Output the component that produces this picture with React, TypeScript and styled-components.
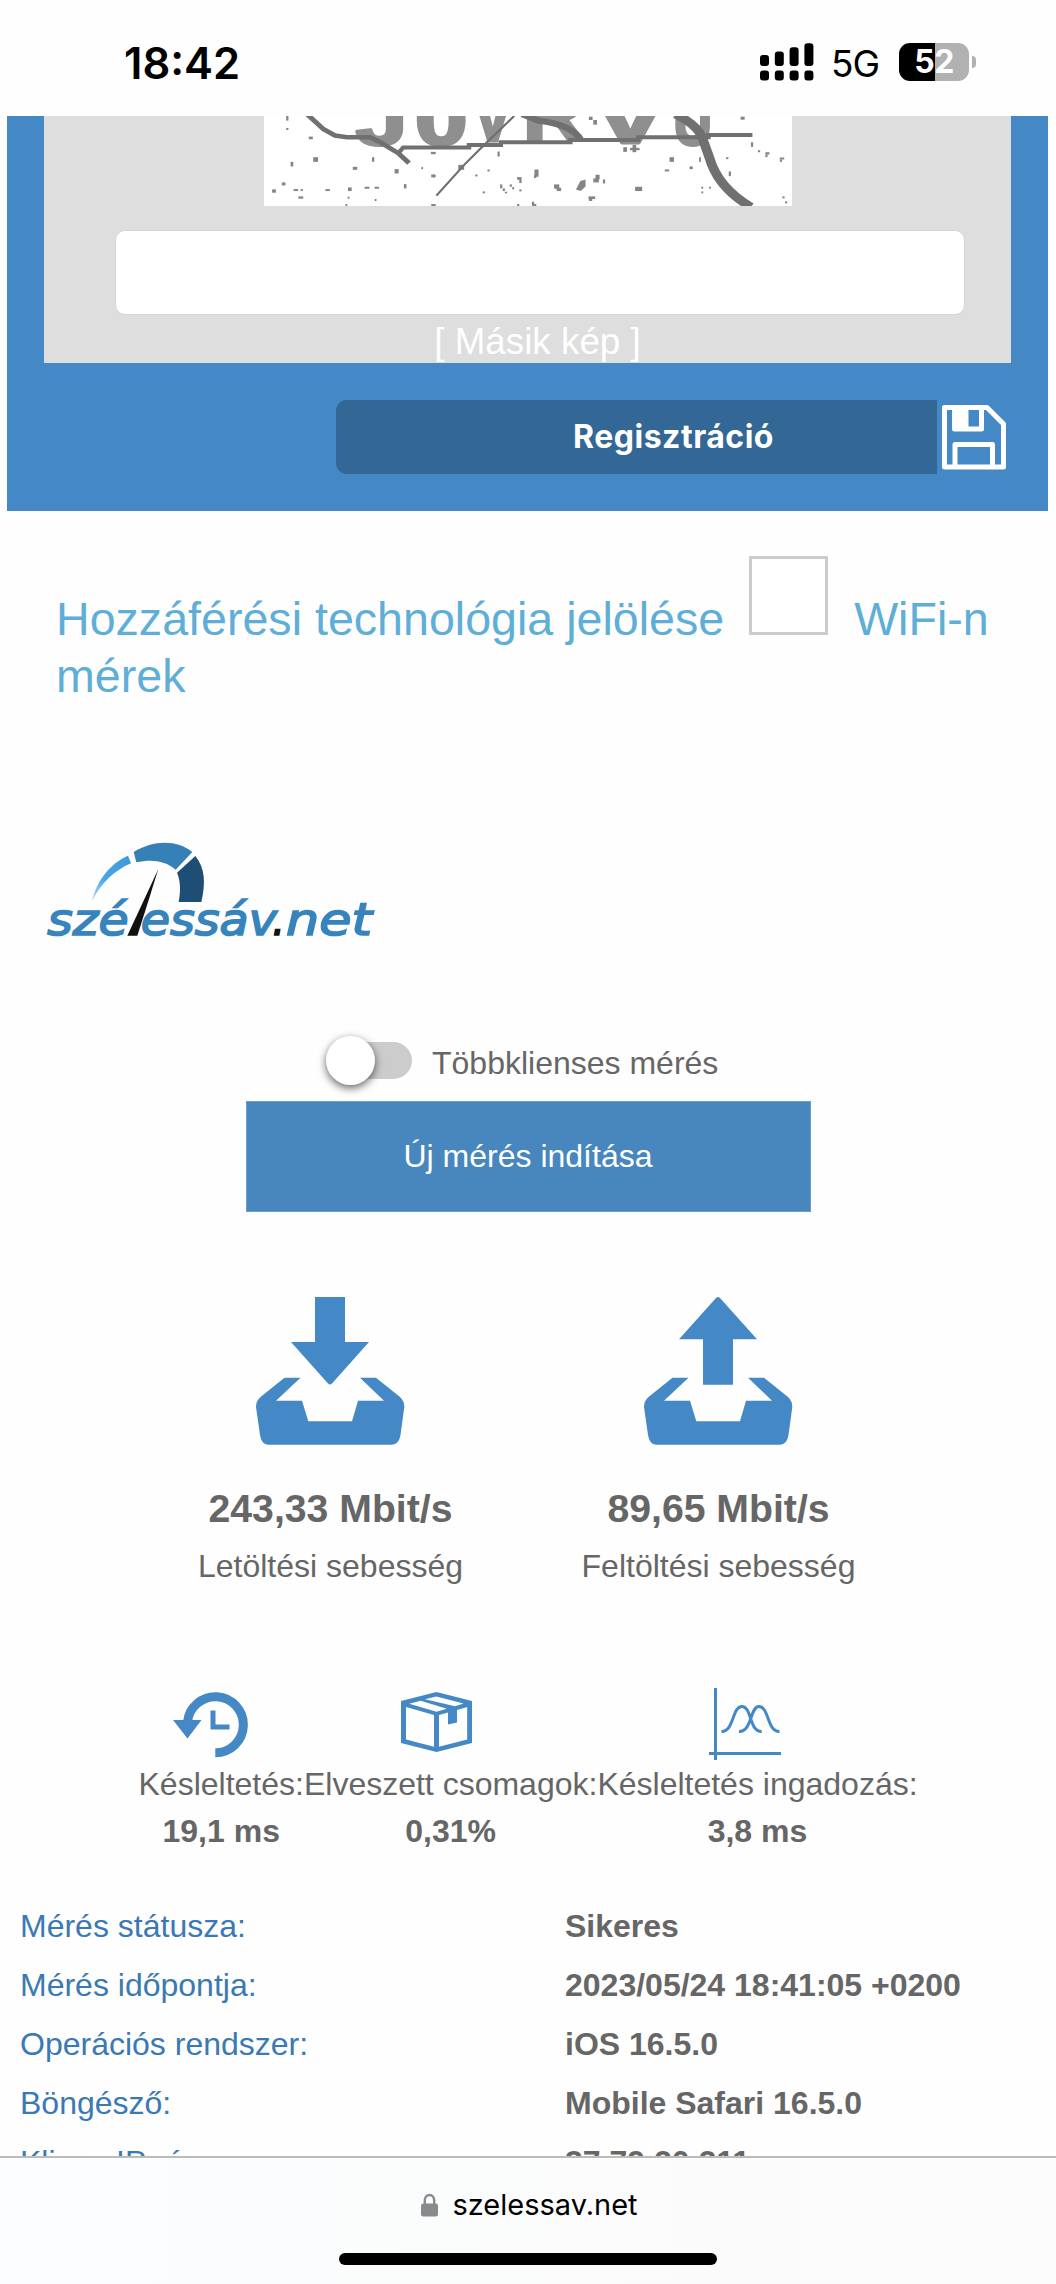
import React from "react";
import styled, { createGlobalStyle } from "styled-components";

const blue = "#4488c5";
const sans = '"Liberation Sans", Arial, sans-serif';
const system = 'Inter, "Liberation Sans", sans-serif';

const Global = createGlobalStyle`
  *, *::before, *::after { box-sizing: border-box; }
  html, body { margin: 0; padding: 0; background: #fefefe; }
  svg { display: block; flex: none; }
`;

const Screen = styled.div`
  width: 1056px;
  height: 2284px;
  display: flex;
  flex-direction: column;
  overflow: hidden;
  background: #fefefe;
  color: #666;
  font-family: ${sans};
  font-size: 32px;
`;

const StatusBar = styled.header`
  height: 116px;
  flex: none;
  display: flex;
  justify-content: space-between;
  padding: 36px 80px 0 124px;
  font-family: ${system};
  color: #000;
`;

const Clock = styled.time`
  font-size: 43.5px;
  font-weight: 600;
  line-height: 55px;
`;

const Indicators = styled.div`
  display: flex;
  height: 52px;
`;

const Network = styled.span`
  width: 67px;
  padding-left: 17px;
  font-size: 37px;
  line-height: 56px;
  letter-spacing: -1px;
  white-space: nowrap;
`;

const Signal = styled.svg`
  margin-top: 7px;
`;

const Battery = styled.div`
  width: 70px;
  height: 38px;
  margin: 7px 0 0 18px;
  border-radius: 11px;
  background: linear-gradient(90deg, #000 36px, #b1b1b1 36px);
  color: #fff;
  font-size: 32px;
  font-weight: 700;
  line-height: 38px;
  letter-spacing: -0.5px;
  text-align: center;
`;

const BatteryTip = styled.span`
  width: 4px;
  height: 12px;
  margin: 20px 0 0 3px;
  border-radius: 0 6px 6px 0;
  background: #b1b1b1;
`;

const FormBand = styled.section`
  flex: none;
  height: 395px;
  margin: 0 8px 0 7px;
  background: ${blue};
`;

const CaptchaPanel = styled.div`
  width: 967px;
  height: 247px;
  margin-left: 37px;
  padding-left: 71px;
  background: #dedede;
`;

const CaptchaImage = styled.svg`
  margin-left: 149px;
  background: #fff;
`;

const CaptchaInput = styled.input`
  display: block;
  width: 850px;
  height: 85px;
  margin-top: 24px;
  border: 1px solid #d6d6d6;
  border-radius: 10px;
  background: #fff;
`;

const OtherImage = styled.a`
  display: block;
  width: 850px;
  padding-right: 5px;
  text-align: center;
  color: #fff;
  font-size: 36.8px;
  line-height: 54px;
`;

const SubmitRow = styled.div`
  display: flex;
  height: 74px;
  margin: 37px 37px 0 329px;
`;

const SubmitButton = styled.button`
  width: 601px;
  padding: 0 0 0 74px;
  border: 0;
  border-radius: 11px 0 0 11px;
  background: #336795;
  color: #fff;
  font-family: ${system};
  font-size: 32px;
  font-weight: 700;
  line-height: 74px;
  letter-spacing: 0.5px;
`;

const Floppy = styled.svg`
  margin: 5px 0 0 5px;
`;

const TechHeading = styled.h2`
  flex: none;
  width: 960px;
  height: 264px;
  margin: 45px 0 0 56px;
  color: #5eaed8;
  font-size: 46.600px;
  font-weight: 400;
  line-height: 56.7px;
`;

const WifiBox = styled.span`
  display: inline-block;
  width: 79px;
  height: 79px;
  margin: 0 13px 0 12px;
  border: 3px solid #ccc;
  background: #fff;
  vertical-align: baseline;
`;

const Logo = styled.svg`
  margin-left: 20px;
`;

const ToggleRow = styled.label`
  flex: none;
  display: flex;
  height: 49px;
  margin: 76px 0 0 326px;
  line-height: 54px;
`;

const Track = styled.span`
  width: 81px;
  height: 37px;
  margin: 6px 20px 0 5px;
  border-radius: 19px;
  background: #ccc;
`;

const Knob = styled.span`
  display: block;
  width: 49px;
  height: 49px;
  margin: -6px 0 0 -5px;
  border-radius: 50%;
  background: #fff;
  box-shadow: 0 3px 8px rgba(0, 0, 0, 0.6);
`;

const StartButton = styled.button`
  flex: none;
  width: 565px;
  height: 111px;
  margin: 16px 0 0 245.5px;
  padding: 0;
  border: 1px solid #6a9fce;
  background: #4787be;
  color: #fff;
  font-family: ${sans};
  font-size: 32px;
  line-height: 109px;
`;

const Speeds = styled.section`
  flex: none;
  display: flex;
  width: 776px;
  margin: 85px 0 0 136.5px;
`;

const Speed = styled.div`
  flex: 1;
  display: flex;
  flex-direction: column;
  align-items: center;
  line-height: 56px;
`;

const SpeedValue = styled.strong`
  margin: 36px 0 1px;
  font-size: 39.2px;
`;

const Stats = styled.section`
  flex: none;
  display: flex;
  width: 779px;
  height: 182px;
  margin: 94px 0 0 138.5px;
`;

const Stat = styled.div`
  display: flex;
  flex-direction: column;
  align-items: center;
  line-height: 47px;
  white-space: nowrap;
`;

const StatIcon = styled.div<{ $gap: number }>`
  height: 73px;
  display: flex;
  align-items: flex-start;
  padding-right: ${(p) => p.$gap}px;
`;

const StatSvg = styled.svg<{ $drop?: number }>`
  margin-top: ${(p) => p.$drop ?? 0}px;
`;

const Details = styled.dl`
  flex: none;
  display: grid;
  grid-template-columns: 545px 1fr;
  grid-auto-rows: 59px;
  height: 259px;
  margin: 27px 0 0;
  padding-left: 20px;
  overflow: hidden;
  line-height: 59px;
`;

const Term = styled.dt`
  color: #3a79b3;
`;

const Value = styled.dd`
  margin: 0;
  font-weight: 700;
`;

const BrowserBar = styled.footer`
  flex: none;
  display: flex;
  flex-direction: column;
  align-items: center;
  height: 129px;
  border-top: 2px solid #bcbcbd;
  background: linear-gradient(90deg, #fbfdfe, #fbfbfb 70%, #fcfcfc);
  color: #000;
  font-family: ${system};
`;

const Address = styled.div`
  display: flex;
  align-items: flex-start;
  gap: 14px;
  margin-top: 29px;
  padding-left: 3px;
  font-size: 29px;
  line-height: 36px;
`;

const Lock = styled.svg`
  margin-top: 6px;
`;

const HomeIndicator = styled.div`
  width: 378px;
  height: 12px;
  margin-top: 30px;
  border-radius: 6px;
  background: #000;
`;

const captchaLetters = [
  { ch: "J", x: 312, y: 134, w: 140 },
  { ch: "0", x: 472, y: 134, w: 142 },
  { ch: "V", x: 628, y: 122, w: 108 },
  { ch: "R", x: 764, y: 120, w: 165 },
  { ch: "V", x: 956, y: 130, w: 196 },
  { ch: "U", x: 1170, y: 134, w: 105 },
];

const specks: number[][] = [
  [124, 48, 6, 14], [124, 84, 6, 6], [185, 110, 11, 8], [136, 186, 7, 14], [197, 172, 13, 14],
  [356, 172, 6, 14], [304, 201, 12, 9], [417, 208, 11, 13], [489, 202, 5, 6], [515, 156, 13, 7],
  [516, 224, 12, 9], [442, 253, 7, 13], [112, 248, 10, 9], [86, 269, 10, 10], [144, 268, 12, 6],
  [163, 268, 6, 6], [157, 290, 13, 7], [230, 268, 12, 6], [291, 263, 10, 11], [336, 261, 13, 6],
  [363, 261, 12, 6], [290, 291, 5, 6], [363, 298, 5, 6], [284, 313, 5, 6], [516, 313, 12, 6],
  [589, 195, 16, 15], [635, 224, 6, 6], [668, 209, 6, 6], [655, 275, 6, 6], [695, 155, 6, 15],
  [748, 232, 12, 8], [754, 238, 6, 12], [728, 254, 6, 7], [735, 262, 5, 7], [702, 254, 6, 12],
  [709, 266, 6, 8], [715, 276, 6, 5], [754, 269, 6, 6], [795, 209, 11, 22], [794, 225, 6, 10],
  [848, 254, 14, 13], [855, 264, 12, 10], [960, 225, 11, 14], [954, 236, 15, 12], [980, 239, 6, 12],
  [1067, 261, 19, 13], [941, 290, 18, 8], [942, 297, 9, 7], [788, 306, 6, 13], [794, 313, 6, 6],
  [748, 313, 6, 6], [1060, 135, 10, 22], [1053, 144, 26, 7], [1035, 142, 10, 14], [1160, 172, 12, 14],
  [1147, 209, 12, 6], [1214, 200, 9, 8], [1240, 172, 5, 14], [1320, 215, 6, 14], [1313, 172, 6, 6],
  [1380, 127, 6, 14], [1399, 151, 6, 6], [1419, 157, 11, 7], [1419, 164, 6, 8], [1458, 173, 12, 6],
  [1458, 179, 6, 7], [1352, 50, 11, 9], [1246, 261, 5, 6], [1246, 275, 5, 6], [1267, 261, 5, 6],
  [1465, 290, 6, 6], [1472, 305, 6, 6], [942, 50, 10, 10], [954, 60, 10, 14],
];

function Captcha() {
  return (
    <CaptchaImage width="528" height="90" viewBox="64 48 1427 271" preserveAspectRatio="none">
      <g
        fill="#8f8f8f"
        stroke="#8f8f8f"
        strokeWidth="9"
        strokeLinejoin="round"
        fontFamily="Liberation Sans, sans-serif"
        fontWeight="700"
        fontSize="215"
      >
        {captchaLetters.map((l) => (
          <text key={l.x} x={l.x} y={l.y} textLength={l.w} lengthAdjust="spacingAndGlyphs">{l.ch}</text>
        ))}
      </g>
      <g fill="#858585">
        {specks.map(([x, y, w, h]) => <rect key={`${x}-${y}`} x={x} y={y} width={w} height={h} />)}
        <path d="M907 269L919 244L933 239V260L920 274Z" />
      </g>
      <g fill="none" stroke="#707070">
        <path d="M180 42L225 88L256 107L288 112H350L375 125L427 160L456 190" strokeWidth="14" />
        <path d="M427 160L440 143H618V135H704V127H892V120H1075V112H1265V105H1384" strokeWidth="12" />
        <path d="M740 48L650 145L605 195L530 288" strokeWidth="6" />
        <path d="M762 42L806 62C865 70 905 90 920 120" strokeWidth="19" />
        <path d="M1176 42C1212 62 1239 85 1249 115L1268 174C1285 240 1325 286 1380 322" strokeWidth="26" />
      </g>
    </CaptchaImage>
  );
}

function FloppyIcon() {
  return (
    <Floppy width="64" height="65" viewBox="0 0 64 65" fill="none" stroke="#fff" strokeWidth="5" strokeLinejoin="round">
      <path d="M2.500 2.500H45L61.500 19V62H2.500Z" />
      <path d="M12.500 3V24H39.500V3" strokeWidth="5" />
      <path d="M11 3H26.500V25H11Z" fill="#fff" stroke="none" />
      <path d="M13 61V39.500H50.500V61" strokeWidth="5" />
    </Floppy>
  );
}

function BrandLogo() {
  const text = {
    fontFamily: "DejaVu Sans, sans-serif",
    fontStyle: "oblique",
    fontSize: 133,
    fill: "#3784bd",
    stroke: "#3784bd",
    strokeWidth: 5,
    lengthAdjust: "spacingAndGlyphs" as const,
    y: 345,
  };
  return (
    <Logo width="380" height="140" viewBox="0 0 1140 420">
      <defs>
        <linearGradient id="sweep" x1="1" y1="0" x2="0" y2="1">
          <stop offset="0" stopColor="#3d98da" />
          <stop offset="0.6" stopColor="#4ba5e3" />
          <stop offset="1" stopColor="#b5dcf6" />
        </linearGradient>
      </defs>
      <path d="M216 244C230 180 272 130 324 107L333 130C285 150 244 188 216 244Z" fill="url(#sweep)" />
      <path d="M341 96C400 60 470 58 517 96L467 149C435 122 396 117 349 127Z" fill="#3580b7" />
      <path d="M526 108C556 145 557 190 544 246H476C483 210 481 180 471 158Z" fill="#1e4e73" />
      <text {...text} x="82" textLength="244">szé</text>
      <path d="M415 147L386 240L352 347H322Z" fill="#111" />
      <text {...text} x="362" textLength="409">essáv</text>
      <text {...text} x="757" textLength="38" fill="#111" stroke="#111">.</text>
      <text {...text} x="798" textLength="258">net</text>
    </Logo>
  );
}

function TrayIcon({ up }: { up?: boolean }) {
  return (
    <svg width="149" height="148" viewBox="0 0 149 148" fill={blue}>
      <path
        d={up
          ? "M72 1Q74 -1 76 1L113 42.300H89V87.700H59V42.300H35Z"
          : "M59 0H89V45H113L76 86.500Q74 88.500 72 86.500L35 45H59Z"}
      />
      <path d="M28.500 80.700H44.500L20 103.700H46L52.300 124.300H96L102 103.700H128L104 80.700H120L144 100Q148.300 104 148.300 110L144.500 138Q143 147.700 136 147.700H12Q5.500 147.700 4 138L0 110Q0 104 4.500 100Z" />
    </svg>
  );
}

const details = [
  ["Mérés státusza:", "Sikeres"],
  ["Mérés időpontja:", "2023/05/24 18:41:05 +0200"],
  ["Operációs rendszer:", "iOS 16.5.0"],
  ["Böngésző:", "Mobile Safari 16.5.0"],
  ["Kliens IP címe:", "37.79.20.211"],
];

const signalTops = [12, 8.500, 4.300, 0.300];

export default function App() {
  return (
    <Screen>
      <Global />
      <StatusBar>
        <Clock>18:42</Clock>
        <Indicators>
          <Signal width="54" height="38" viewBox="0 0 54 38">
            {signalTops.map((top, i) => (
              <g key={top}>
                <rect x={i * 14.8} y={top} width="9" height={23 - top} rx="3" />
                <rect x={i * 14.8} y="27.500" width="9" height="10" rx="3" />
              </g>
            ))}
          </Signal>
          <Network>5G</Network>
          <Battery>52</Battery>
          <BatteryTip />
        </Indicators>
      </StatusBar>

      <FormBand>
        <CaptchaPanel>
          <Captcha />
          <CaptchaInput />
          <OtherImage>[ Másik kép ]</OtherImage>
        </CaptchaPanel>
        <SubmitRow>
          <SubmitButton>Regisztráció</SubmitButton>
          <FloppyIcon />
        </SubmitRow>
      </FormBand>

      <TechHeading>
        Hozzáférési technológia jelölése <WifiBox /> WiFi-n mérek
      </TechHeading>

      <BrandLogo />

      <ToggleRow>
        <Track><Knob /></Track>
        Többklienses mérés
      </ToggleRow>
      <StartButton>Új mérés indítása</StartButton>

      <Speeds>
        <Speed>
          <TrayIcon />
          <SpeedValue>243,33 Mbit/s</SpeedValue>
          Letöltési sebesség
        </Speed>
        <Speed>
          <TrayIcon up />
          <SpeedValue>89,65 Mbit/s</SpeedValue>
          Feltöltési sebesség
        </Speed>
      </Speeds>

      <Stats>
        <Stat>
          <StatIcon $gap={21}>
            <StatSvg $drop={4} width="75" height="66" viewBox="0 0 75 66" fill={blue}>
              <path d="M14.500 30A28 28 0 1 1 42.300 60.800" fill="none" stroke={blue} strokeWidth="9" />
              <path d="M0 28H28.500L14.500 46.500Z" />
              <path d="M37.500 18.500H42.500V32.500H56.500V37.500H37.500Z" />
            </StatSvg>
          </StatIcon>
          <span>Késleltetés:</span>
          <strong>19,1 ms</strong>
        </Stat>
        <Stat>
          <StatIcon $gap={28}>
            <StatSvg $drop={4} width="71" height="60" viewBox="0 0 71 60" fill={blue}>
              <path d="M35.500 0L71 9V51L35.500 60L0 51V9Z" />
              <g fill="#fefefe">
                <path d="M8.200 11.700L19.700 8.700L45.900 16.700L35.400 19.700Z" />
                <path d="M23.900 7.300L35.400 4.400L62.600 11.400L54 14.300Z" />
                <path d="M5 15L33 23V54.700L5 47.500Z" />
                <path d="M38 23L47 20.500V32.500L56 30.500V18L66.200 15V47.500L38 54.700Z" />
              </g>
            </StatSvg>
          </StatIcon>
          <span>Elveszett csomagok:</span>
          <strong>0,31%</strong>
        </Stat>
        <Stat>
          <StatIcon $gap={23}>
            <StatSvg width="73" height="73" viewBox="0 0 73 73" fill="none" stroke={blue} strokeWidth="3">
              <path d="M6.500 0V72M0 65.500H72" />
              <path d="M12.500 43.500C25 44 23 18.500 32.900 18.500C43 18.500 40 44 52.700 43.500M30 43.500C43 44 41 18.500 50 18.500C60 18.500 58 44 70.500 43.500" />
            </StatSvg>
          </StatIcon>
          <span>Késleltetés ingadozás:</span>
          <strong>3,8 ms</strong>
        </Stat>
      </Stats>

      <Details>
        {details.map(([term, value]) => (
          <React.Fragment key={term}>
            <Term>{term}</Term>
            <Value>{value}</Value>
          </React.Fragment>
        ))}
      </Details>

      <BrowserBar>
        <Address>
          <Lock width="17" height="24" viewBox="0 0 17 24">
            <path d="M3.800 12V7.500A4.700 5.500 0 0 1 13.200 7.500V12" fill="none" stroke="#8a8a8e" strokeWidth="2.400" />
            <rect y="10.500" width="17" height="13" rx="2.500" fill="#8a8a8e" />
          </Lock>
          szelessav.net
        </Address>
        <HomeIndicator />
      </BrowserBar>
    </Screen>
  );
}
